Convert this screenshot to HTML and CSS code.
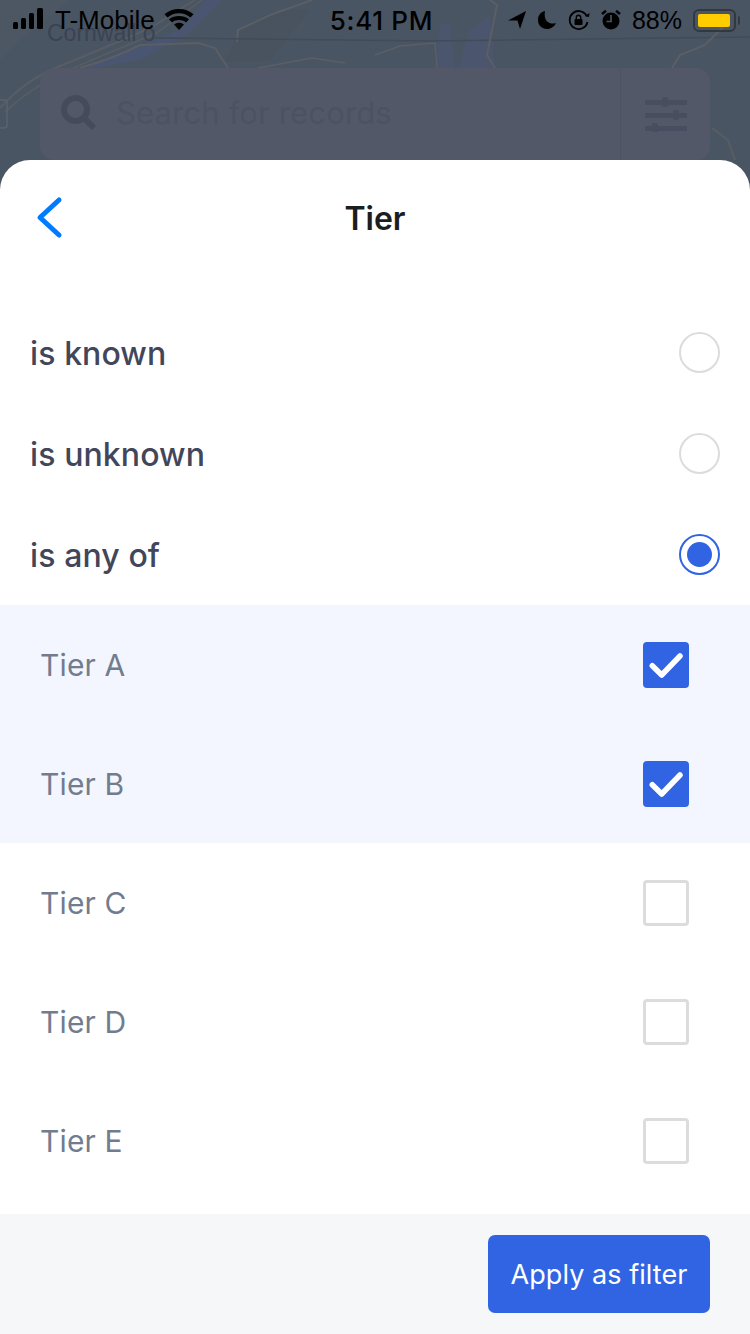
FILE: index.html
```html
<!DOCTYPE html>
<html lang="en">
<head>
<title>Tier filter</title>
<meta charset="UTF-8">
<meta name="viewport" content="width=device-width, initial-scale=1.0" />
<link rel="stylesheet" href="styles.css">
</head>

<body>

<div class="backdrop">
    <!-- Map lines behind the dimmed search bar -->
    <svg class="map" viewBox="0 0 750 160" fill="none">
        <path d="M0 0H750V160H0Z" fill="#4a5563"/>
        <path d="M0 0H70L20 40 0 60Z" fill="#4d5764"/>
        <path d="M240 30Q270 5 310 10L270 60 225 62Z" fill="#48535f"/>
        <path d="M60 88L95 62 140 46 180 30 205 0H222L190 32 140 60 95 68 70 86Z" fill="#4a5671"/>
        <path d="M435 68L440 25 450 22 455 68Z" fill="#4b566e"/>
        <path d="M458 68L470 30 490 15 495 68Z" fill="#4b566e"/>
        <path d="M665 0L675 50 668 20Z" fill="#4a5671"/>
        <path d="M0 108Q25 80 60 66T150 28L195 0" stroke="#585d64" stroke-width="2"/>
        <path d="M5 112Q30 88 65 72T155 34L202 0" stroke="#585d64" stroke-width="1.500"/>
        <path d="M80 68Q115 58 140 45L198 43 215 48 228 68" stroke="#5a5e65" stroke-width="2"/>
        <path d="M237 42L238 30 270 15 312 0" stroke="#5a5e65" stroke-width="2"/>
        <path d="M258 68L312 58 345 63" stroke="#5a5e65" stroke-width="1.500"/>
        <path d="M155 38L430 41 750 37" stroke="#424b5a" stroke-width="1.500"/>
        <path d="M375 55L400 46 435 43 437 68" stroke="#5a5e65" stroke-width="1.500"/>
        <path d="M490 0L497 5 487 55 495 68" stroke="#5a5e65" stroke-width="2"/>
        <path d="M672 68L680 55 705 45 725 25" stroke="#5a5e65" stroke-width="2"/>
        <path d="M712 128L728 140 735 160" stroke="#585d64" stroke-width="2"/>
        <rect x="-10" y="100" width="17" height="28" rx="3" stroke="#5b626d" stroke-width="1.500"/>
    </svg>
    <span class="map-label">Cornwall o</span>

    <!-- Status bar -->
    <div class="status-bar">
        <div class="status-left">
            <svg class="signal" width="34" height="22" viewBox="0 0 34 22" fill="#000">
                <rect x="0" y="14" width="5" height="7" rx="1.500"/>
                <rect x="8" y="10" width="5" height="11" rx="1.500"/>
                <rect x="16" y="5" width="5" height="16" rx="1.500"/>
                <rect x="24" y="0" width="6" height="21" rx="1.500"/>
            </svg>
            <span>T-Mobile</span>
            <svg class="wifi" width="30" height="22" viewBox="0 0 30 22" fill="#000">
                <path d="M15 22L10 16.500C13 14 17 14 20 16.500Z"/>
                <path d="M8 14.500L5 11.200C10.500 6.800 19.500 6.800 25 11.200L22 14.500C18 11.300 12 11.300 8 14.500Z"/>
                <path d="M3.500 9.500L0.500 6.200C8.500 -0.800 21.500 -0.800 29.500 6.200L26.500 9.500C20 3.800 10 3.800 3.500 9.500Z"/>
            </svg>
        </div>
        <span class="status-time">5:41 PM</span>
        <div class="status-right">
            <svg width="18" height="20" viewBox="0 0 18 20" fill="#000"><path d="M0 10.500L18 1 12 19 9.500 10.500Z"/></svg>
            <svg width="20" height="20" viewBox="0 0 20 20" fill="#000"><path d="M8 1C3.500 2 1 5.500 1 10C1 15.500 5 19 10 19C14 19 17.500 16.500 19 13C13.500 15 6 12 8 1Z"/></svg>
            <svg width="22" height="20" viewBox="0 0 22 20" fill="none" stroke="#000" stroke-width="1.800"><path d="M19 6.500A9 9 0 1 0 19.500 12"/><path d="M17 6L21 7 21.500 3" fill="#000" stroke="none"/><rect x="6.500" y="9" width="8" height="6" rx="1" fill="#000" stroke="none"/><path d="M8.300 9V7.500A2.200 2.200 0 0 1 12.700 7.500V9" stroke-width="1.400"/></svg>
            <svg width="20" height="20" viewBox="0 0 20 20"><circle cx="10" cy="11" r="8.500" fill="#000"/><path d="M1 4L5 0.800M19 4L15 0.800" stroke="#000" stroke-width="2.500"/><path d="M10 5V11.500H5.500" fill="none" stroke="#4a5563" stroke-width="1.600"/></svg>
            <span class="battery-pct">88%</span>
            <div class="battery"><div class="battery-fill"></div></div>
            <div class="battery-cap"></div>
        </div>
    </div>

    <div class="search-bar">
        <svg class="search-icon" width="38" height="38" viewBox="0 0 38 38" fill="none" stroke="#454b5d">
            <circle cx="15.500" cy="15.500" r="11.500" stroke-width="6"/>
            <path d="M24 24L34 34" stroke-width="6"/>
        </svg>
        <span class="search-text">Search for records</span>
        <div class="search-filter">
            <svg width="44" height="36" viewBox="0 0 44 36" fill="#484d5f">
                <rect x="1" y="4" width="42" height="5" rx="1"/>
                <rect x="18" y="1" width="6" height="10" rx="2"/>
                <rect x="1" y="17" width="42" height="5" rx="1"/>
                <rect x="29" y="14" width="6" height="10" rx="2"/>
                <rect x="1" y="30" width="42" height="5" rx="1"/>
                <rect x="8" y="27" width="6" height="10" rx="2"/>
            </svg>
        </div>
    </div>
</div>

<div class="sheet">
    <header class="sheet-header">
        <svg class="back" width="28" height="44" viewBox="0 0 28 44" fill="none" stroke="#007aff" stroke-width="5" stroke-linecap="round" stroke-linejoin="round">
            <path d="M24 4L5 21.500 24 39"/>
        </svg>
        <h1>Tier</h1>
    </header>

    <div class="options">
        <div class="option"><span class="option-label">is known</span><div class="radio"></div></div>
        <div class="option"><span class="option-label">is unknown</span><div class="radio"></div></div>
        <div class="option"><span class="option-label">is any of</span><div class="radio selected"><div class="radio-dot"></div></div></div>
    </div>

    <div class="tiers">
        <div class="tier checked">
            <span>Tier A</span>
            <div class="checkbox on">
                <svg width="46" height="46" viewBox="0 0 46 46" fill="none" stroke="#fff" stroke-width="5.500" stroke-linecap="round" stroke-linejoin="round"><path d="M9.300 23.700L18.700 33 37 14"/></svg>
            </div>
        </div>
        <div class="tier checked">
            <span>Tier B</span>
            <div class="checkbox on">
                <svg width="46" height="46" viewBox="0 0 46 46" fill="none" stroke="#fff" stroke-width="5.500" stroke-linecap="round" stroke-linejoin="round"><path d="M9.300 23.700L18.700 33 37 14"/></svg>
            </div>
        </div>
        <div class="tier"><span>Tier C</span><div class="checkbox"></div></div>
        <div class="tier"><span>Tier D</span><div class="checkbox"></div></div>
        <div class="tier"><span>Tier E</span><div class="checkbox"></div></div>
    </div>

    <footer class="sheet-footer">
        <button class="apply">Apply as filter</button>
    </footer>
</div>

</body>
</html>
```

FILE: styles.css
```css
* {box-sizing: border-box;}

body {
    font-family: Inter, 'Noto Sans', sans-serif;
    margin: 0;
    width: 750px;
    height: 1334px;
    overflow: hidden;
    background-color: #fff;
}

.backdrop {
    position: relative;
    height: 190px;
    margin-bottom: -30px;
    overflow: hidden;
    background-color: #4a5563;
}

.map {
    position: absolute;
    left: 0;
    top: 0;
    width: 750px;
    height: 160px;
}

.map-label {
    position: absolute;
    left: 47px;
    top: 20px;
    font-family: 'Liberation Sans', sans-serif;
    font-size: 23px;
    color: #3b4351;
}

.status-bar {
    position: relative;
    display: flex;
    align-items: center;
    justify-content: space-between;
    height: 40px;
    padding: 0 13px;
    font-family: 'Liberation Sans', sans-serif;
    font-size: 25px;
    color: #000;
}

.status-left {
    display: flex;
    align-items: center;
    width: 242px;
    gap: 8px;
    font-size: 26px;
}

.signal {
    margin-top: -2px;
}

.wifi {
    margin-left: 1px;
    margin-top: -2px;
}

.status-time {
    font-family: Inter, sans-serif;
    font-size: 26px;
    font-weight: 500;
    letter-spacing: 0.7px;
}

.status-right {
    display: flex;
    align-items: center;
    gap: 11px;
    margin-right: -3px;
}

.battery {
    width: 43px;
    height: 23px;
    padding: 3px;
    border: 2px solid #33383f;
    border-radius: 6px;
}

.battery-fill {
    width: 32px;
    height: 100%;
    border-radius: 2px;
    background-color: #ffcc00;
}

.battery-cap {
    width: 2px;
    height: 9px;
    margin-left: -9px;
    border-radius: 0 2px 2px 0;
    background-color: #33383f;
}

.search-bar {
    position: relative;
    display: flex;
    align-items: center;
    height: 92px;
    margin: 28px 40px 0;
    border-radius: 14px;
    background-color: #535869;
}

.search-icon {
    margin-left: 20px;
    margin-top: -2px;
}

.search-text {
    flex: 1;
    margin-left: 18px;
    margin-top: -4px;
    font-size: 31px;
    letter-spacing: 0.15px;
    color: #4c5163;
}

.search-filter {
    display: flex;
    align-items: center;
    justify-content: center;
    width: 90px;
    height: 100%;
    border-left: 1px solid #4e5364;
}

.sheet {
    position: relative;
    display: flex;
    flex-direction: column;
    height: 1174px;
    border-radius: 30px 30px 0 0;
    background-color: #fff;
}

.sheet-header {
    position: relative;
    display: flex;
    align-items: center;
    justify-content: center;
    height: 117px;
    margin-bottom: 25px;
}

.back {
    position: absolute;
    left: 35px;
    top: 36px;
}

h1 {
    margin: 0;
    margin-top: -1px;
    font-size: 32px;
    font-weight: 600;
    color: #1c1d21;
}

.option {
    display: flex;
    align-items: center;
    justify-content: space-between;
    height: 101px;
    padding: 0 30px;
    font-size: 32px;
    font-weight: 500;
    letter-spacing: 0.1px;
    color: #42465a;
}

.option-label {
    margin-top: 2px;
}

.radio {
    display: flex;
    align-items: center;
    justify-content: center;
    width: 41px;
    height: 41px;
    border: 2px solid #dcdcdc;
    border-radius: 50%;
}

.radio.selected {
    border-color: #3064e3;
}

.radio-dot {
    width: 25px;
    height: 25px;
    border-radius: 50%;
    background-color: #3064e3;
}

.tiers {
    flex: 1;
}

.tier {
    display: flex;
    align-items: center;
    justify-content: space-between;
    height: 119px;
    padding: 0 61px 0 40px;
    font-size: 30px;
    letter-spacing: 0.15px;
    color: #717c8f;
}

.tier.checked {
    background-color: #f3f6fe;
}

.checkbox {
    width: 46px;
    height: 46px;
    border: 3px solid #dcdcdc;
    border-radius: 4px;
}

.checkbox.on {
    border: none;
    background-color: #3064e3;
}

.checkbox svg {
    display: block;
}

.sheet-footer {
    display: flex;
    justify-content: flex-end;
    align-items: center;
    height: 120px;
    padding-right: 40px;
    background-color: #f6f7f9;
}

.apply {
    width: 222px;
    height: 78px;
    border: none;
    border-radius: 7px;
    font-family: inherit;
    font-size: 27px;
    letter-spacing: 0.05px;
    color: #fff;
    background-color: #3064e3;
}
```
